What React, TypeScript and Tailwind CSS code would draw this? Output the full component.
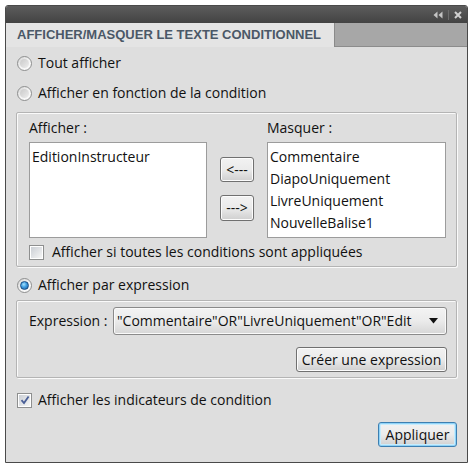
import React from "react";

const font = { fontFamily: '"Open Sans", "Liberation Sans", Arial, sans-serif' };

function Radio({ checked = false }: { checked?: boolean }) {
  return (
    <span className="relative flex h-[15px] w-[15px] shrink-0 items-center justify-center rounded-full border border-[#8e8f8f] bg-gradient-to-br from-[#d4d4d4] via-[#f4f4f4] to-[#fcfcfc]">
      {checked ? (
        <span className="h-[9px] w-[9px] rounded-full border border-[#1b4f86] bg-[radial-gradient(circle_at_40%_35%,#a6e2ff_0%,#3d9ce0_45%,#1c5a9c_100%)]" />
      ) : (
        <span className="h-[9px] w-[9px] rounded-full bg-gradient-to-br from-[#c9c9c9] to-[#eeeeee]" />
      )}
    </span>
  );
}

function Check({ checked = false }: { checked?: boolean }) {
  return (
    <span className="flex h-[15px] w-[15px] shrink-0 items-center justify-center border border-[#8e8f8f] bg-white">
      <span className="flex h-[11px] w-[11px] items-center justify-center bg-gradient-to-br from-[#cbcfd5] to-[#f6f6f6]">
        {checked && (
          <svg width="10" height="10" viewBox="0 0 10 10">
            <path d="M1.5 5.2 L4 8 L8.6 1.4" fill="none" stroke="#4a5f97" strokeWidth="1.8" />
          </svg>
        )}
      </span>
    </span>
  );
}

function Btn({ children, className = "", primary = false }: { children: React.ReactNode; className?: string; primary?: boolean }) {
  return (
    <div
      className={`flex items-center justify-center rounded-[3px] border ${
        primary
          ? "border-[#3c7fb1] shadow-[inset_0_0_0_1px_#8fd3f8,inset_0_0_0_2px_#c8ecfc]"
          : "border-[#707070] shadow-[inset_0_0_0_1px_#fcfcfc]"
      } bg-gradient-to-b from-[#f2f2f2] via-[#ebebeb] to-[#cfcfcf] text-[14px] text-[#111] ${className}`}
    >
      {children}
    </div>
  );
}

export default function App() {
  return (
    <div className="h-[468px] w-[473px] bg-white pl-[5px] pt-[5px] text-[14px] leading-[20px] text-[#111]" style={font}>
      <div className="flex h-[458px] w-[463px] flex-col rounded-tl-[3px] rounded-tr-[3px] border border-[#4a4a4a] bg-[#dedede]">
        {/* title bar */}
        <div className="flex h-[17px] items-center justify-end gap-[5px] rounded-t-[2px] bg-gradient-to-b from-[#5c5c5c] to-[#434343] pr-[5px]">
          <svg width="10" height="8" viewBox="0 0 10 8">
            <path d="M4.5 0.5 L0.5 4 L4.5 7.5 Z M9.5 0.5 L5.5 4 L9.5 7.5 Z" fill="#c4c4c4" />
          </svg>
          <span className="h-[10px] w-px bg-[#6c6c6c]" />
          <svg width="8" height="8" viewBox="0 0 8 8">
            <path d="M1 1 L7 7 M7 1 L1 7" stroke="#d0d0d0" strokeWidth="2" />
          </svg>
        </div>

        {/* tab strip */}
        <div className="flex h-[24px] bg-[#a7a7a7]">
          <div
            className="flex w-[329px] items-center border-r border-[#8a8a8a] bg-[#e4e4e4] pl-[11px] text-[13px] font-bold text-[#4b5867]"
            style={{ fontFamily: '"Liberation Sans", Arial, sans-serif' }}
          >
            AFFICHER/MASQUER LE TEXTE CONDITIONNEL
          </div>
          <div className="flex-1 border-b border-[#8c8c8c]" />
        </div>

        {/* content */}
        <div className="flex flex-1 flex-col px-[10px]">
          <div className="mt-[6px] flex h-[20px] items-center gap-[6px] pl-[1px]">
            <Radio />
            <span>Tout afficher</span>
          </div>
          <div className="mt-[10px] flex h-[20px] items-center gap-[6px] pl-[1px]">
            <Radio />
            <span>Afficher en fonction de la condition</span>
          </div>

          {/* group 1 */}
          <div className="mt-[9px] flex h-[155px] flex-col rounded-[2px] border border-[#b4b4b4] pl-[12px] pr-[9px] pt-[5px] shadow-[1px_1px_0_#fafafa,inset_1px_1px_0_#fafafa]">
            <div className="flex">
              <div className="flex w-[178px] flex-col">
                <span className="h-[20px]">Afficher :</span>
                <div className="mt-[4px] h-[96px] border border-[#9c9c9c] bg-white pl-[2px] pt-[3px] leading-[22px]">
                  EditionInstructeur
                </div>
              </div>
              <div className="flex w-[60px] flex-col items-center pt-[39px]">
                <Btn className="h-[25px] w-[34px]">&lt;---</Btn>
                <Btn className="mt-[13px] h-[26px] w-[34px]">---&gt;</Btn>
              </div>
              <div className="flex w-[179px] flex-col">
                <span className="h-[20px]">Masquer :</span>
                <div className="mt-[4px] h-[96px] border border-[#9c9c9c] bg-white pl-[2px] pt-[3px] leading-[22px]">
                  <div>Commentaire</div>
                  <div>DiapoUniquement</div>
                  <div>LivreUniquement</div>
                  <div>NouvelleBalise1</div>
                </div>
              </div>
            </div>
            <div className="mt-[4px] flex h-[20px] items-center gap-[8px]">
              <Check />
              <span>Afficher si toutes les conditions sont appliquées</span>
            </div>
          </div>

          <div className="mt-[8px] flex h-[20px] items-center gap-[6px] pl-[1px]">
            <Radio checked />
            <span>Afficher par expression</span>
          </div>

          {/* group 2 */}
          <div className="mt-[5px] flex h-[78px] flex-col rounded-[2px] border border-[#b4b4b4] pl-[12px] pr-[9px] pt-[6px] shadow-[1px_1px_0_#fafafa,inset_1px_1px_0_#fafafa]">
            <div className="flex h-[28px] items-center">
              <span className="w-[84px]">Expression :</span>
              <div className="flex h-[28px] flex-1 items-center rounded-[3px] border border-[#8a8a8a] bg-gradient-to-b from-[#f3f3f3] via-[#ebebeb] to-[#d6d6d6] pl-[3px] pr-[8px] shadow-[inset_0_0_0_1px_#fafafa]">
                <span className="flex-1 overflow-hidden whitespace-nowrap">"Commentaire"OR"LivreUniquement"OR"Edit</span>
                <svg width="9" height="6" viewBox="0 0 9 6" className="ml-[6px]">
                  <path d="M0 0 H9 L4.5 5.5 Z" fill="#111" />
                </svg>
              </div>
            </div>
            <div className="mt-[12px] flex justify-end">
              <Btn className="h-[25px] w-[151px]">Créer une expression</Btn>
            </div>
          </div>

          <div className="mt-[12px] flex h-[20px] items-center gap-[6px] pl-[1px]">
            <Check checked />
            <span>Afficher les indicateurs de condition</span>
          </div>

          <div className="mt-[12px] flex justify-end">
            <Btn primary className="h-[25px] w-[79px]">Appliquer</Btn>
          </div>
        </div>
      </div>
    </div>
  );
}
